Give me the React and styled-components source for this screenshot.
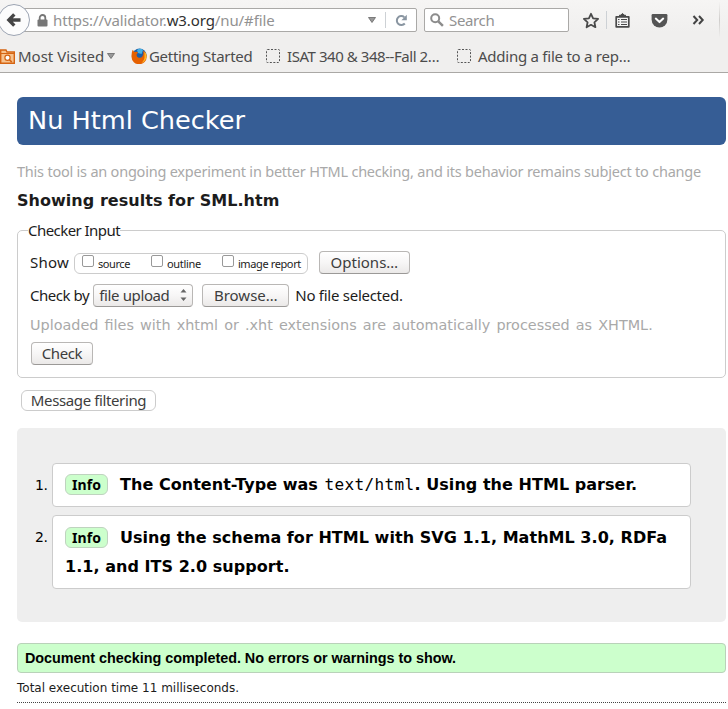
import React from 'react';
import styled, { createGlobalStyle } from 'styled-components';

const Global = createGlobalStyle`
  * { box-sizing: border-box; }
  body { margin: 0; background: #fff; overflow: hidden; }
`;

const Window = styled.div`
  width: 728px;
  height: 709px;
  overflow: hidden;
  font: 15px/20px 'Noto Sans', sans-serif;
  color: #1c1c1c;
`;

const Label = styled.span`
  white-space: nowrap;
  letter-spacing: ${(p) => p.$track || 0}px;
`;

/* Browser chrome */
const Chrome = styled.header`
  height: 73px;
  border-bottom: 1px solid #aaa8a5;
  background: linear-gradient(#f6f5f4, #f0efee 45%, #f0efee);
  color: #4c4c4c;
`;
const NavBar = styled.div`
  display: flex;
  align-items: center;
  height: 40px;
`;
const BackIcon = styled.svg`
  width: 30px;
  height: 34px;
  flex: none;
  z-index: 1;
`;
const AddressBar = styled.div`
  display: flex;
  align-items: center;
  width: 396px;
  height: 24px;
  margin-left: -9px;
  padding-left: 15px;
  border: 1px solid #aaa9a7;
  border-radius: 2px;
  background: #fff;
`;
const Url = styled(Label)`
  width: 315px;
  margin-left: 5px;
  color: #929292;
  b { font-weight: 400; color: #303030; }
`;
const Divider = styled.i`
  width: 1px;
  height: ${(p) => p.$h}px;
  margin: 0 ${(p) => p.$right || 0}px 0 ${(p) => p.$left || 0}px;
  background: #cdd1d5;
`;
const SearchBox = styled.div`
  display: flex;
  align-items: center;
  gap: 5px;
  width: 145px;
  height: 24px;
  margin-left: 7px;
  padding-left: 5px;
  border: 1px solid #aaa9a7;
  border-radius: 2px;
  background: #fff;
  color: #929292;
`;
const Tools = styled.div`
  display: flex;
  align-items: center;
  margin-left: 13px;
`;
const EdgeDivider = styled(Divider)`
  background: linear-gradient(#f4f3f2, #cfcdcb 50%, #f0efee);
`;
const Svg = styled.svg`
  flex: none;
  display: block;
  margin-left: ${(p) => p.$left || 0}px;
`;
const Bookmarks = styled.nav`
  display: flex;
  align-items: center;
  height: 32px;
`;
const Bookmark = styled.div`
  display: flex;
  align-items: center;
  gap: ${(p) => p.$gap}px;
  width: ${(p) => p.$w}px;
  ${Label} { padding-bottom: 1px; }
`;

/* Page */
const Page = styled.main`
  display: flex;
  flex-direction: column;
  padding: 24px 2px 0 17px;
`;
const Title = styled.h1`
  height: 48px;
  margin: 0;
  padding-left: 11px;
  border-radius: 6px;
  background: #365d95;
  color: #fff;
  font: 25.6px/46px 'DejaVu Sans', sans-serif;
`;
const Notice = styled.p`
  margin: 16px 0 0;
  color: #a9a9a9;
  font-size: 14.5px;
  white-space: nowrap;
  letter-spacing: -0.218px;
`;
const Heading = styled.h2`
  margin: 10px 0 0;
  font: bold 16px/20px 'DejaVu Sans', sans-serif;
  letter-spacing: 0.04px;
  color: #1c1c1c;
`;
const Form = styled.fieldset`
  height: 158px;
  margin: 9px 0 0;
  padding: 0 12px;
  border: 1px solid #ccc;
  border-radius: 5px;
`;
const Legend = styled.legend`
  height: 20px;
  margin-left: -2px;
  padding: 0;
`;
const Row = styled.div`
  display: flex;
  align-items: center;
  height: 23px;
  margin-top: ${(p) => p.$top}px;
`;
const RowLabel = styled(Label)`
  margin-left: ${(p) => p.$left || 0}px;
  padding-bottom: 2px;
`;
const Options = styled.div`
  display: flex;
  width: 234px;
  height: 21px;
  margin: 1px 11px 0 5px;
  border: 1px solid #ccc;
  border-radius: 6px;
  padding-left: 7px;
  font-size: 11px;
`;
const Option = styled.label`
  display: flex;
  width: ${(p) => p.$w}px;
  gap: 4px;
`;
const Checkbox = styled.i`
  width: 12px;
  height: 12px;
  margin-top: 1px;
  border: 1px solid #999;
  border-radius: 2px;
  background: #fff;
`;
const Button = styled.button`
  display: flex;
  align-items: center;
  justify-content: center;
  width: ${(p) => p.$w}px;
  height: 23px;
  margin: 0 0 0 ${(p) => p.$left || 0}px;
  padding: 0 0 1px;
  border: 1px solid #b9b7b5;
  border-bottom-color: #9b9997;
  border-radius: 4px;
  background: linear-gradient(#fff, #f7f6f6 50%, #ebe9e8);
  font: inherit;
  color: #3d3d3d;
`;
const Select = styled(Button)`
  justify-content: space-between;
  padding: 0 5px 1px;
`;
const Hint = styled.p`
  margin: 8px 0 0;
  color: #a9a9a9;
  font: 14.4px/20px 'DejaVu Sans', sans-serif;
  word-spacing: 1.55px;
  white-space: nowrap;
`;
const FilterButton = styled(Button)`
  height: 21px;
  margin: 12px 0 0 4px;
  border: 1px solid #ccc;
  border-radius: 6px;
  background: #fff;
`;
const Results = styled.section`
  height: 194px;
  margin-top: 17px;
  padding: 35px 35px 0 18px;
  border-radius: 5px;
  background: #eee;
  color: #000;
`;
const Messages = styled.ol`
  display: flex;
  flex-direction: column;
  gap: 8px;
  margin: 0;
  padding: 0;
  list-style: none;
`;
const Message = styled.li`
  display: flex;
`;
const Index = styled.span`
  width: 17px;
  flex: none;
  padding-top: 8px;
  font: 14px/28px 'DejaVu Sans', sans-serif;
  letter-spacing: -0.3px;
`;
const Card = styled.p`
  flex: 1;
  height: ${(p) => p.$h}px;
  margin: 0;
  padding: ${(p) => p.$top}px 12px 0;
  border: 1px solid #ccc;
  border-radius: 4px;
  background: #fff;
  font: bold 16px/29px 'DejaVu Sans', sans-serif;
  letter-spacing: 0.04px;
  code {
    font: 16px/20px 'DejaVu Sans Mono', monospace;
    letter-spacing: 0.37px;
    margin-left: 1px;
  }
`;
const Badge = styled.span`
  display: inline-block;
  width: 43px;
  height: 21px;
  margin-right: 12px;
  border: 1px solid #bfd3bf;
  border-radius: 6px;
  background: #cfc;
  font: bold 14px/20px 'Noto Sans', sans-serif;
  text-align: center;
  vertical-align: baseline;
`;
const Success = styled.p`
  height: 30px;
  margin: 21px 0 0;
  padding-left: 7px;
  border: 1px solid #b9d2b9;
  border-radius: 4px;
  background: #cfc;
  color: #000;
  font: bold 14.4px/28px 'Liberation Sans', sans-serif;
  letter-spacing: -0.03px;
`;
const Timing = styled.p`
  height: 30px;
  margin: 0;
  border-bottom: 1px dotted #444;
  font: 12px/30px 'DejaVu Sans', sans-serif;
`;

const Caret = ({ left }) => (
  <Svg $left={left} width="8" height="6"><path d="M.5.5h7L4 5.5z" fill="#999" stroke="#666" strokeWidth=".8" /></Svg>
);
const Placeholder = () => (
  <Svg width="14" height="14"><rect x=".5" y=".5" width="13" height="13" rx="1" fill="none" stroke="#555" strokeDasharray="2 1.5" /></Svg>
);

const checks = [
  { text: 'source', w: 69, track: -0.4 },
  { text: 'outline', w: 71, track: -0.3 },
  { text: 'image report', w: 80, track: -0.38 },
];

export default function App() {
  return (
    <Window>
      <Global />
      <Chrome>
        <NavBar>
          <BackIcon viewBox="0 3 30 34">
            <circle cx="14" cy="20" r="15.5" fill="#fcfcfc" stroke="#9ca4b2" />
            <path d="M14.3 14.3L8.8 20l5.5 5.7M9.5 20h11" fill="none" stroke="#454545" strokeWidth="3.3" />
          </BackIcon>
          <AddressBar>
            <Svg width="11" height="13" viewBox="0 0 11 13">
              <path d="M2.7 6V3.8a2.8 2.8 0 0 1 5.6 0V6" fill="none" stroke="#777" strokeWidth="1.8" />
              <rect x=".5" y="5.5" width="10" height="7" rx="1" fill="#777" />
            </Svg>
            <Url $track={-0.1}>https://validator.<b>w3.org</b>/nu/#file</Url>
            <Caret />
            <Divider $h={16} $left={9} $right={9} />
            <Svg width="13" height="13" viewBox="0 0 13 13">
              <path d="M9.8 9.5A4.5 4.5 0 1 1 9.3 3.2" fill="none" stroke="#8995a1" strokeWidth="2" />
              <path d="M11.8.8v5.4H6.4z" fill="#8995a1" />
            </Svg>
          </AddressBar>
          <SearchBox>
            <Svg width="14" height="14" viewBox="0 0 14 14">
              <circle cx="5.2" cy="5.2" r="4" fill="none" stroke="#8c8c8c" strokeWidth="2" />
              <path d="M8.3 8.3l4.6 4.6" stroke="#8c8c8c" strokeWidth="2.4" />
            </Svg>
            <Label $track={-0.35}>Search</Label>
          </SearchBox>
          <Tools>
            <Svg width="18" height="17" viewBox="0 0 18 17">
              <path d="M9 1.8l2.1 4.5 5 .6-3.7 3.4 1 4.9L9 12.8l-4.4 2.4 1-4.9L1.9 6.9l5-.6z" fill="none" stroke="#4a4a4a" strokeWidth="1.8" strokeLinejoin="round" />
            </Svg>
            <Divider $h={18} $left={6} $right={8} />
            <Svg width="15" height="15" viewBox="0 0 15 15">
              <path d="M1.2 3.8h12.6v10H1.2z" fill="#f5f5f5" stroke="#4a4a4a" strokeWidth="1.7" strokeLinejoin="round" />
              <path d="M4.5 3V2.2h1.3L7.5.4l1.7 1.8h1.3V3z" fill="#4a4a4a" stroke="#4a4a4a" />
              <path d="M3 6.5h1.5M6 6.5h6M3 9h1.5M6 9h6M3 11.5h1.5M6 11.5h6" stroke="#4a4a4a" strokeWidth="1.1" />
            </Svg>
            <Svg $left={21} width="17" height="15" viewBox="0 0 17 15">
              <path d="M1.8 1h13.4q1.2 0 1.2 1.2v4.4a7.9 7.9 0 0 1-15.8 0V2.2Q.6 1 1.8 1z" fill="#555" />
              <path d="M4.8 5.6l3.7 3.5 3.7-3.5" fill="none" stroke="#fff" strokeWidth="2" strokeLinecap="round" strokeLinejoin="round" />
            </Svg>
            <Svg $left={24} width="13" height="10" viewBox="0 0 13 10">
              <path d="M1.5 1l3.7 4-3.7 4M7 1l3.7 4L7 9" fill="none" stroke="#444" strokeWidth="2" />
            </Svg>
            <EdgeDivider $h={36} $left={14} />
          </Tools>
        </NavBar>
        <Bookmarks>
          <Bookmark $w={131} $gap={3}>
            <Svg width="15" height="15" viewBox="0 0 15 15">
              <path d="M.7 1h5.3l1 2h7.3v11.3H.7z" fill="#f7c28d" stroke="#d56412" strokeWidth="1.4" />
              <path d="M0 4.5h14" stroke="#d56412" />
              <circle cx="7.5" cy="8.8" r="2.6" fill="#fff" stroke="#d56412" strokeWidth="1.2" />
              <path d="M9.2 10.5l2.6 2.6" stroke="#d56412" strokeWidth="1.5" />
            </Svg>
            <Label>Most Visited</Label>
            <Caret />
          </Bookmark>
          <Bookmark $w={135} $gap={2}>
            <Svg width="16" height="16" viewBox="0 0 16 16">
              <circle cx="8.5" cy="7.5" r="7" fill="#1c5fa8" />
              <path d="M6 2q3-2.6 6 0l-1.5 4L7 5z" fill="#46b1e3" />
              <path d="M1.7 1.8L3.4 4q2-.9 3.7.5L5.6 6.5q-.3 2.6 2.1 3.2 2.6.5 3.7-1.4 1.6-2.3.6-5.8 3.6 2 3.7 6A7.5 7.5 0 0 1 .5 8.8Q.3 4.5 1.7 1.8z" fill="#e66000" />
              <path d="M13.5 3.2q2.2 2.4 2 5.6-.5 4.5-5 6.2 3.5-3.2 3-7.4z" fill="#ffb824" />
            </Svg>
            <Label $track={-0.3}>Getting Started</Label>
          </Bookmark>
          <Bookmark $w={191} $gap={7}><Placeholder /><Label $track={-0.44}>ISAT 340 &amp; 348--Fall 2…</Label></Bookmark>
          <Bookmark $w={180} $gap={7}><Placeholder /><Label $track={-0.25}>Adding a file to a rep…</Label></Bookmark>
        </Bookmarks>
      </Chrome>
      <Page>
        <Title>Nu Html Checker</Title>
        <Notice>This tool is an ongoing experiment in better HTML checking, and its behavior remains subject to change</Notice>
        <Heading>Showing results for SML.htm</Heading>
        <Form>
          <Legend><Label $track={-0.55}>Checker Input</Label></Legend>
          <Row $top={11}>
            <RowLabel $track={0.2}>Show</RowLabel>
            <Options>
              {checks.map((c) => (
                <Option key={c.text} $w={c.w}><Checkbox /><Label $track={c.track}>{c.text}</Label></Option>
              ))}
            </Options>
            <Button $w={91}><Label>Options…</Label></Button>
          </Row>
          <Row $top={10}>
            <RowLabel $track={-0.45}>Check by</RowLabel>
            <Select as="div" $w={100} $left={4}>
              <Label $track={-0.38}>file upload</Label>
              <Svg width="7" height="14"><path d="M.5 4.5L3.5 1l3 3.5zM.5 9.5l3 3.5 3-3.5z" fill="#666" /></Svg>
            </Select>
            <Button $w={87} $left={9}><Label>Browse…</Label></Button>
            <RowLabel $track={-0.27} $left={6}>No file selected.</RowLabel>
          </Row>
          <Hint>Uploaded files with xhtml or .xht extensions are automatically processed as XHTML.</Hint>
          <Row $top={7}><Button $w={62} $left={1}><Label $track={-0.4}>Check</Label></Button></Row>
        </Form>
        <FilterButton $w={135}><Label $track={-0.38}>Message filtering</Label></FilterButton>
        <Results>
          <Messages>
            <Message>
              <Index>1.</Index>
              <Card $h={44} $top={6}><Badge>Info</Badge>The Content-Type was <code>text/html</code>. Using the HTML parser.</Card>
            </Message>
            <Message>
              <Index>2.</Index>
              <Card $h={74} $top={7}><Badge>Info</Badge>Using the schema for HTML with SVG 1.1, MathML 3.0, RDFa 1.1, and ITS 2.0 support.</Card>
            </Message>
          </Messages>
        </Results>
        <Success>Document checking completed. No errors or warnings to show.</Success>
        <Timing>Total execution time 11 milliseconds.</Timing>
      </Page>
    </Window>
  );
}
